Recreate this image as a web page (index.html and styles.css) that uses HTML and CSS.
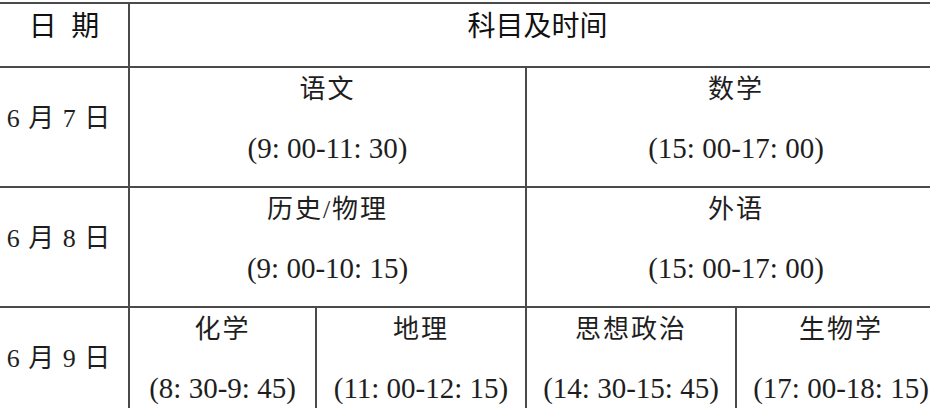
FILE: index.html
```html
<!DOCTYPE html>
<html lang="zh-CN">
<head>
<meta charset="utf-8">
<title>考试时间安排</title>
<link rel="stylesheet" href="styles.css">
</head>
<body>
<div class="table">
  <div class="cell head date-col">日 期</div>
  <div class="cell head span-4">科目及时间</div>

  <div class="cell date date-col">6 月 7 日</div>
  <div class="cell subj-cell span-2"><div class="subj">语文</div><div class="time">(9: 00-11: 30)</div></div>
  <div class="cell subj-cell span-2"><div class="subj">数学</div><div class="time">(15: 00-17: 00)</div></div>

  <div class="cell date date-col">6 月 8 日</div>
  <div class="cell subj-cell span-2"><div class="subj">历史/物理</div><div class="time">(9: 00-10: 15)</div></div>
  <div class="cell subj-cell span-2"><div class="subj">外语</div><div class="time">(15: 00-17: 00)</div></div>

  <div class="cell date date-col">6 月 9 日</div>
  <div class="cell subj-cell"><div class="subj">化学</div><div class="time">(8: 30-9: 45)</div></div>
  <div class="cell subj-cell"><div class="subj">地理</div><div class="time">(11: 00-12: 15)</div></div>
  <div class="cell subj-cell"><div class="subj">思想政治</div><div class="time">(14: 30-15: 45)</div></div>
  <div class="cell subj-cell"><div class="subj">生物学</div><div class="time">(17: 00-18: 15)</div></div>
</div>
</body>
</html>
```
FILE: styles.css
```css
html, body {
  margin: 0;
  padding: 0;
  overflow: hidden;
  background: #ffffff;
  width: 930px;
  height: 408px;
}
body {
  padding-top: 2px;
  box-sizing: border-box;
  font-family: "Liberation Serif", "Noto Sans CJK SC", serif;
  color: #1e1e1e;
}
.table {
  display: grid;
  grid-template-columns: 128px 187px 210px 210px 210px;
  grid-template-rows: 64px 120px 120px 120px;
  width: 945px;
}
.cell {
  border-top: 2px solid #4a4a4a;
  border-left: 2px solid #4a4a4a;
  display: flex;
  flex-direction: column;
  align-items: center;
  box-sizing: border-box;
  min-width: 0;
}
.date-col {
  border-left: none;
}
.span-2 { grid-column: span 2; }
.span-4 { grid-column: span 4; }
.head {
  font-family: "Noto Sans CJK SC", sans-serif;
  font-size: 28px;
  line-height: 40px;
  color: #111;
}
.head.date-col {
  letter-spacing: 4px;
  padding-left: 4px;
}
.date {
  font-size: 26px;
  line-height: 44px;
  padding-top: 29px;
  letter-spacing: 1px;
  padding-right: 10px;
}
.subj {
  font-size: 26px;
  line-height: 44px;
  letter-spacing: 2px;
}
.time {
  font-size: 29px;
  line-height: 44px;
  margin-top: 14px;
  white-space: nowrap;
}
```
